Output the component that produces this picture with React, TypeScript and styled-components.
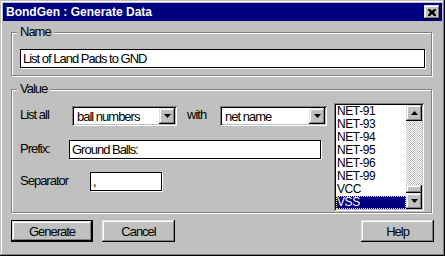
import { FC } from "react";
import styled, { createGlobalStyle } from "styled-components";

const GlobalStyle = createGlobalStyle`
  html, body {
    margin: 0;
    padding: 0;
    background: #c0c0c0;
  }
  body {
    font-family: "Liberation Sans", Arial, sans-serif;
    font-size: 13px;
    letter-spacing: -1px;
    color: #000;
  }
`;

const raised = `
  box-shadow: inset -1px -1px #000, inset 1px 1px #dfdfdf,
    inset -2px -2px #808080, inset 2px 2px #fff;
`;

const sunken = `
  box-shadow: inset 1px 1px #808080, inset -1px -1px #fff,
    inset 2px 2px #000, inset -2px -2px #c0c0c0;
`;

const Window = styled.div`
  box-sizing: border-box;
  width: 445px;
  height: 256px;
  padding: 3px;
  background: #c0c0c0;
  box-shadow: inset -1px -1px #000, inset 1px 1px #c0c0c0,
    inset -2px -2px #808080, inset 2px 2px #fff;
  display: flex;
  flex-direction: column;
`;

const TitleBar = styled.div`
  height: 18px;
  flex-shrink: 0;
  background: #000080;
  color: #fff;
  font-size: 12px;
  font-weight: bold;
  letter-spacing: 0;
  display: flex;
  align-items: center;
  justify-content: space-between;
  padding: 0 2px 0 3px;
`;

const CloseButton = styled.div`
  width: 16px;
  height: 14px;
  background: #c0c0c0;
  ${raised}
  display: flex;
  align-items: center;
  justify-content: center;
`;

const Group = styled.fieldset<{ top: number; pad: string }>`
  box-sizing: border-box;
  width: 421px;
  margin: ${({ top }) => top}px 0 0 8px;
  padding: ${({ pad }) => pad};
  border: 1px solid #808080;
  box-shadow: inset 1px 1px #fff, 1px 1px #fff;
  min-inline-size: 0;
`;

const Legend = styled.legend`
  line-height: 14px;
  padding: 0 3px;
  margin-left: -3px;
  background: #c0c0c0;
`;

const TextBox = styled.div<{ w: number }>`
  box-sizing: border-box;
  width: ${({ w }) => w}px;
  height: 19px;
  background: #fff;
  border: 1px solid #000;
  box-shadow: 1px 1px #fff;
  padding: 0 2px;
  line-height: 17px;
  white-space: nowrap;
  overflow: hidden;
`;

const ValueBody = styled.div`
  display: flex;
  justify-content: space-between;
`;

const Fields = styled.div`
  display: flex;
  flex-direction: column;
  padding-top: 3px;
`;

const Row = styled.div<{ gap: number }>`
  display: flex;
  align-items: center;
  margin-top: ${({ gap }) => gap}px;
`;

const Label = styled.span<{ w: number }>`
  width: ${({ w }) => w}px;
  flex-shrink: 0;
  margin-top: -3px;
`;

const With = styled.span`
  margin: -3px 0 0 10px;
  width: 33px;
`;

const Combo = styled.div<{ w: number }>`
  box-sizing: border-box;
  width: ${({ w }) => w}px;
  height: 20px;
  background: #fff;
  ${sunken}
  padding: 2px;
  display: flex;
  align-items: center;
`;

const ComboText = styled.span`
  flex: 1;
  padding-left: 3px;
  white-space: nowrap;
`;

const ArrowButton = styled.div<{ h?: number }>`
  width: 16px;
  height: ${({ h }) => h ?? 16}px;
  flex-shrink: 0;
  background: #c0c0c0;
  ${raised}
  display: flex;
  align-items: center;
  justify-content: center;
`;

const ListBox = styled.div`
  box-sizing: border-box;
  width: 90px;
  height: 108px;
  background: #fff;
  ${sunken}
  padding: 2px;
  display: flex;
`;

const Items = styled.div`
  flex: 1;
  overflow: hidden;
  font-size: 12px;
  letter-spacing: -0.4px;
`;

const Item = styled.div<{ selected?: boolean }>`
  height: 13px;
  line-height: 13px;
  padding-left: 1px;
  background: ${({ selected }) => (selected ? "#000080" : "transparent")};
  color: ${({ selected }) => (selected ? "#fff" : "#000")};
  outline: ${({ selected }) => (selected ? "1px dotted #ffff00" : "none")};
  outline-offset: -1px;
`;

const ScrollBar = styled.div`
  width: 16px;
  display: flex;
  flex-direction: column;
`;

const Track = styled.div`
  flex: 1;
  display: flex;
  flex-direction: column;
  justify-content: flex-end;
  background: repeating-conic-gradient(#c0c0c0 0 25%, #fff 0 50%) 0 0 / 2px
    2px;
`;

const Buttons = styled.div`
  display: flex;
  margin: 7px 8px 0 8px;
`;

const Button = styled.div<{ w: number; isDefault?: boolean; push?: boolean }>`
  box-sizing: border-box;
  width: ${({ w }) => w}px;
  height: 22px;
  margin-left: ${({ push }) => (push ? "auto" : "0")};
  background: #c0c0c0;
  border: ${({ isDefault }) => (isDefault ? "1px solid #000" : "none")};
  ${raised}
  display: flex;
  align-items: center;
  justify-content: center;
`;

const Spacer = styled.div<{ w: number }>`
  width: ${({ w }) => w}px;
`;

const Arrow: FC<{ up?: boolean }> = ({ up }) => (
  <svg width="7" height="4" viewBox="0 0 7 4">
    <path
      d={up ? "M3.5 0 L7 4 L0 4 Z" : "M0 0 L7 0 L3.5 4 Z"}
      fill="#000"
    />
  </svg>
);

const nets = ["NET-91", "NET-93", "NET-94", "NET-95", "NET-96", "NET-99", "VCC"];

const App: FC = () => {
  return (
    <>
      <GlobalStyle />
      <Window>
        <TitleBar>
          <span>BondGen : Generate Data</span>
          <CloseButton>
            <svg width="8" height="7" viewBox="0 0 8 7">
              <path
                d="M0 0h2l2 2 2-2h2v1L6 3.5 8 6v1H6L4 5 2 7H0V6l2-2.5L0 1z"
                fill="#000"
              />
            </svg>
          </CloseButton>
        </TitleBar>

        <Group top={4} pad="10px 5px 7px 8px">
          <Legend>Name</Legend>
          <TextBox w={405}>List of Land Pads to GND</TextBox>
        </Group>

        <Group top={6} pad="7px 7px 1px 8px">
          <Legend>Value</Legend>
          <ValueBody>
            <Fields>
              <Row gap={0}>
                <Label w={52}>List all</Label>
                <Combo w={105}>
                  <ComboText>ball numbers</ComboText>
                  <ArrowButton>
                    <Arrow />
                  </ArrowButton>
                </Combo>
                <With>with</With>
                <Combo w={107}>
                  <ComboText>net name</ComboText>
                  <ArrowButton>
                    <Arrow />
                  </ArrowButton>
                </Combo>
              </Row>
              <Row gap={14}>
                <Label w={49}>Prefix:</Label>
                <TextBox w={252}>Ground Balls:</TextBox>
              </Row>
              <Row gap={13}>
                <Label w={70}>Separator</Label>
                <TextBox w={72}>,</TextBox>
              </Row>
            </Fields>
            <ListBox>
              <Items>
                {nets.map((n) => (
                  <Item key={n}>{n}</Item>
                ))}
                <Item selected>VSS</Item>
              </Items>
              <ScrollBar>
                <ArrowButton>
                  <Arrow up />
                </ArrowButton>
                <Track>
                  <ArrowButton h={8} />
                </Track>
                <ArrowButton>
                  <Arrow />
                </ArrowButton>
              </ScrollBar>
            </ListBox>
          </ValueBody>
        </Group>

        <Buttons>
          <Button w={82} isDefault>
            Generate
          </Button>
          <Spacer w={9} />
          <Button w={73}>Cancel</Button>
          <Button w={73} push>
            Help
          </Button>
        </Buttons>
      </Window>
    </>
  );
};

export default App;
